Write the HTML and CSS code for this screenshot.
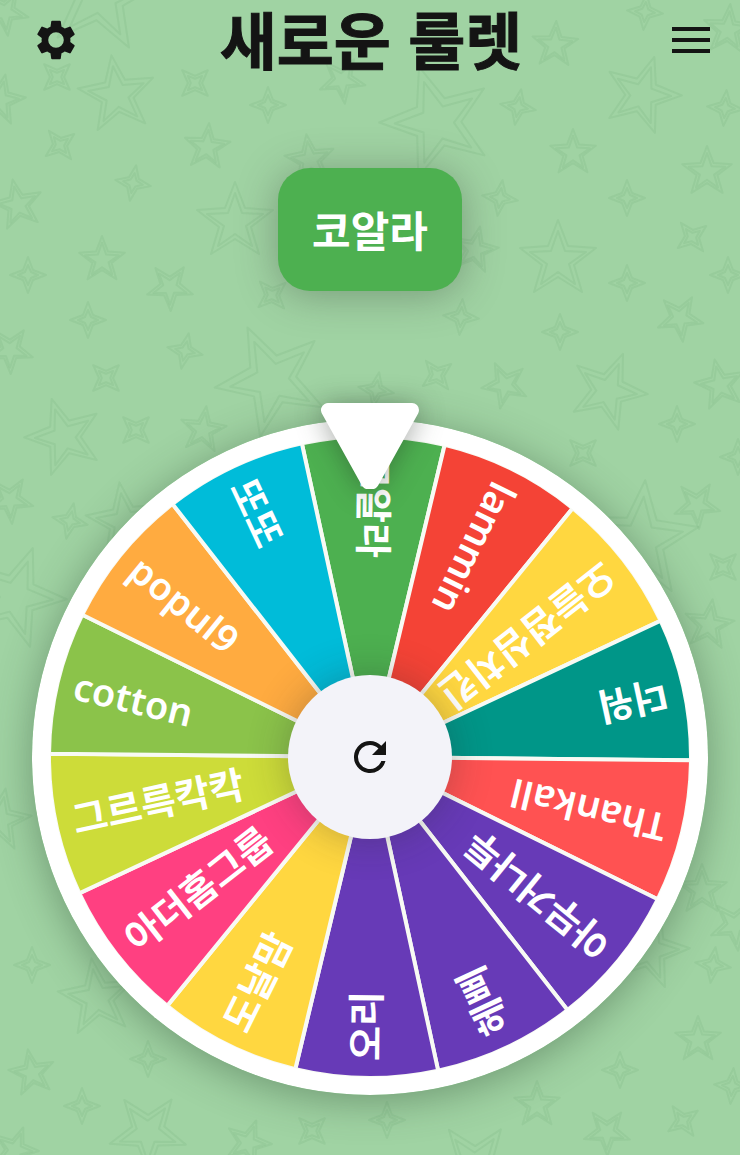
FILE: index.html
```html
<!DOCTYPE html>
<html lang="ko">
<head>
<meta charset="utf-8">
<meta name="viewport" content="width=device-width, initial-scale=1">
<title>새로운 룰렛</title>
<link rel="stylesheet" href="styles.css">
</head>
<body>
<svg class="backdrop" viewBox="0 0 740 1155" preserveAspectRatio="xMidYMin slice" aria-hidden="true">
  <defs>
    <g id="star"><path class="line" d="M0-40 10-14 38-12 16 5 24 32 0 17-24 32-16 5-38-12-10-14Z"/><path class="line" d="M0-29 7-9 28-8 11 4 17 24 0 12-17 24-11 4-28-8-7-9Z"/></g>
    <g id="spark"><path class="line" d="M0-18 5-5 18 0 5 5 0 18-5 5-18 0-5-5Z"/><path class="line" d="M0-10 3-3 10 0 3 3 0 10-3 3-10 0-3-3Z"/></g>
  </defs>
  <g id="stars"></g>
</svg>
<header class="top-bar">
  <button class="icon-button" type="button" aria-label="설정">
    <svg class="icon" viewBox="0 0 24 24"><path d="M19.14 12.94c.04-.3.06-.61.06-.94 0-.32-.02-.64-.07-.94l2.03-1.58a.49.49 0 0 0 .12-.61l-1.92-3.32a.49.49 0 0 0-.59-.22l-2.39.96c-.5-.38-1.03-.7-1.62-.94l-.36-2.54a.48.48 0 0 0-.48-.41h-3.84c-.24 0-.43.17-.47.41l-.36 2.54c-.59.24-1.13.57-1.62.94l-2.39-.96a.48.48 0 0 0-.59.22L2.74 8.87a.47.47 0 0 0 .12.61l2.03 1.58c-.05.3-.09.63-.09.94s.02.64.07.94l-2.03 1.58a.49.49 0 0 0-.12.61l1.92 3.32c.12.22.37.29.59.22l2.39-.96c.5.38 1.03.7 1.62.94l.36 2.54c.05.24.24.41.48.41h3.84c.24 0 .44-.17.47-.41l.36-2.54c.59-.24 1.13-.56 1.62-.94l2.39.96c.22.08.47 0 .59-.22l1.92-3.32a.47.47 0 0 0-.12-.61zM12 15.9a3.9 3.9 0 1 1 0-7.8 3.9 3.9 0 0 1 0 7.8z"/></svg>
  </button>
  <h1 class="title">새로운 룰렛</h1>
  <button class="icon-button" type="button" aria-label="메뉴">
    <svg class="icon" viewBox="0 0 48 48"><path d="M10 11h38v4H10zM10 22h38v4H10zM10 33h38v4H10z"/></svg>
  </button>
</header>
<main class="stage">
  <output class="result">코알라</output>
  <div class="wheel">
    <svg class="disc" viewBox="-338 -338 676 676" role="img" aria-label="룰렛">
      <circle class="rim" r="338"/>
      <g id="slices"></g>
    </svg>
    <button class="spin" type="button" aria-label="다시 돌리기">
      <svg class="icon" viewBox="0 0 24 24"><path d="M17.65 6.35A7.96 7.96 0 0 0 12 4a8 8 0 1 0 7.73 10h-2.08A6 6 0 1 1 12 6c1.66 0 3.14.69 4.22 1.78L13 11h7V4z"/></svg>
    </button>
    <svg class="pointer" viewBox="0 0 98 86" aria-hidden="true"><path d="M7 7H91L51 79H47Z"/></svg>
  </div>
</main>
<script src="wheel.js"></script>
</body>
</html>
```
FILE: styles.css
```css
* { box-sizing: border-box; }

body {
  margin: 0;
  min-height: 100vh;
  position: relative;
  overflow-x: hidden;
  background: #a0d3a3;
  color: #141414;
  font-family: "Noto Sans CJK KR", sans-serif;
}

.backdrop {
  position: absolute;
  inset: 0;
  width: 100%;
  height: 100%;
  z-index: -1;
}

.line {
  fill: none;
  stroke: #3f8150;
  stroke-opacity: 0.09;
  stroke-width: 2px;
  stroke-linejoin: round;
  vector-effect: non-scaling-stroke;
}

.top-bar {
  display: flex;
  align-items: center;
  justify-content: space-between;
  height: 80px;
  padding: 0 30px 0 32px;
}

.icon-button,
.spin {
  display: grid;
  place-items: center;
  padding: 0;
  border: 0;
  background: none;
  color: inherit;
  cursor: pointer;
}

.icon {
  display: block;
  width: 48px;
  height: 48px;
  fill: currentColor;
}

.title {
  margin: 0;
  padding-bottom: 4px;
  font-size: 62px;
  line-height: 76px;
  font-weight: 700;
  -webkit-text-stroke: 1px currentColor;
  white-space: nowrap;
}

.stage {
  display: flex;
  flex-direction: column;
  align-items: center;
  padding: 88px 32px 60px;
}

.result {
  padding: 31px 34px 33px;
  border-radius: 32px;
  background: #4db050;
  box-shadow: 0 4px 40px rgba(60, 70, 60, 0.4);
  color: #fff;
  font-size: 42px;
  line-height: 59px;
  font-weight: 700;
}

.wheel {
  position: relative;
  display: grid;
  place-items: center;
  width: 100%;
  margin-top: 128px;
}

.disc {
  display: block;
  width: 100%;
  border-radius: 50%;
  box-shadow: 0 6px 40px rgba(50, 80, 55, 0.45);
}

.rim { fill: #fff; }

.slice {
  stroke: #f8faf4;
  stroke-width: 4px;
}

.label {
  fill: #fff;
  font-family: "Noto Sans", "Noto Sans CJK KR", sans-serif;
  font-size: 38px;
  font-weight: 700;
}

.label-latin { font-weight: 600; }

.spin {
  position: absolute;
  width: 164px;
  height: 164px;
  border-radius: 50%;
  background: #f3f3f9;
  box-shadow: 0 0 40px rgba(40, 40, 40, 0.3);
}

.pointer {
  position: absolute;
  top: -16px;
  width: 98px;
  height: 86px;
  overflow: visible;
  fill: #fff;
  stroke: #fff;
  stroke-width: 14px;
  stroke-linejoin: round;
  filter: drop-shadow(0 2px 14px rgba(30, 40, 30, 0.4));
}
```
FILE: wheel.js
```js
const SVG = "http://www.w3.org/2000/svg";

function add(parent, name, attrs, text) {
  const node = document.createElementNS(SVG, name);
  for (const key in attrs) node.setAttribute(key, attrs[key]);
  if (text) node.textContent = text;
  parent.appendChild(node);
}

const entries = [
  ["코알라", "#4db050"],
  ["lammin", "#f44336"],
  ["오늘점심치킨", "#ffd740"],
  ["더워", "#009688"],
  ["Thankall", "#ff5252"],
  ["아무거나투", "#673ab7"],
  ["헤삐", "#673ab7"],
  ["오리", "#673ab7"],
  ["도날맘", "#ffd740"],
  ["아더홈그룹", "#ff4081"],
  ["그르륵칵칵", "#cddc39"],
  ["cotton", "#8bc34a"],
  ["popul9", "#ffab40"],
  ["또또", "#00bcd9"]
];

const slices = document.getElementById("slices");
const step = 360 / entries.length;
const radius = 321;
const half = step / 2 * Math.PI / 180;
const x = radius * Math.cos(half);
const y = radius * Math.sin(half);
const turn = i => `rotate(${i * step + 90.6})`;

entries.forEach(([, color], i) => add(slices, "path", {
  class: "slice", fill: color, transform: turn(i),
  d: `M0 0L${-x} ${-y}A${radius} ${radius} 0 0 0 ${-x} ${y}Z`
}));
add(slices, "circle", { r: radius + 1, fill: "none", stroke: "#fff", "stroke-width": 4 });
entries.forEach(([name], i) => add(slices, "text", {
  class: /^[a-z]/i.test(name) ? "label label-latin" : "label",
  x: -304, y: 13, transform: turn(i)
}, name));

// x, y, scale, rotation
const stars = [
  [117, 95, 1, -8], [0, 100, .65, 12], [100, -5, 1.5, 8], [342, 80, .6, 30],
  [207, 147, .6, 5], [437, 122, 1.45, -18], [555, 45, .6, 3], [642, 95, 1, 18],
  [573, 153, .6, 0], [707, 172, .65, 0], [18, 205, .65, -12], [235, 222, 1, 0],
  [558, 260, 1, 0], [102, 260, .6, 0], [170, 287, .6, 35], [680, 318, .6, 30],
  [310, 160, .65, -8], [475, 250, .6, 12], [10, 350, .6, 35], [272, 380, 1.45, -25],
  [64, 437, 1, -18], [203, 430, .6, 8], [10, 500, .6, 32], [15, 597, 1.3, 20],
  [125, 522, 1, -8], [505, 385, .6, -25], [608, 391, 1, 22], [720, 385, .65, -12],
  [697, 505, .6, 32], [640, 540, 1.5, 5], [97, 998, 1, -8], [32, 1073, .6, -10],
  [148, 1132, 1, 36], [248, 1143, .6, 20], [15, 1150, .6, 20], [698, 1040, .6, 0],
  [537, 1105, .6, 0], [607, 1132, .6, 36], [475, 1165, 1.1, 36], [650, 950, 1, 15],
  [735, 925, .65, 30], [702, 890, .65, 0], [709, 625, .65, 8], [5, 12, .6, 30],
  [728, 30, .65, 5], [0, 820, .8, 10]
];
const sparks = [
  [57, 77, 45], [195, 83, 45], [268, 105, 0], [518, 107, 10], [60, 145, 52],
  [133, 183, 10], [28, 275, 0], [500, 198, 8], [627, 198, 0], [692, 237, 52],
  [627, 283, 0], [645, 12, 5], [725, 108, 5], [728, 275, 0], [272, 295, 48],
  [88, 320, 0], [185, 351, 12], [106, 378, 45], [136, 430, 45], [70, 521, 12],
  [461, 317, 5], [560, 332, 0], [437, 375, 52], [677, 424, 0], [583, 453, 45],
  [723, 567, 45], [376, 390, 10], [738, 457, 0], [32, 965, 0], [148, 1059, 0],
  [82, 1106, 0], [312, 1131, 45], [387, 1120, 0], [620, 1070, 0], [732, 1086, 5],
  [683, 1121, 55], [713, 965, 8]
];
const layer = document.getElementById("stars");
stars.forEach(([cx, cy, s, r]) => add(layer, "use", {
  href: "#star", transform: `translate(${cx} ${cy}) rotate(${r}) scale(${s})`
}));
sparks.forEach(([cx, cy, r]) => add(layer, "use", {
  href: "#spark", transform: `translate(${cx} ${cy}) rotate(${r})`
}));
```
